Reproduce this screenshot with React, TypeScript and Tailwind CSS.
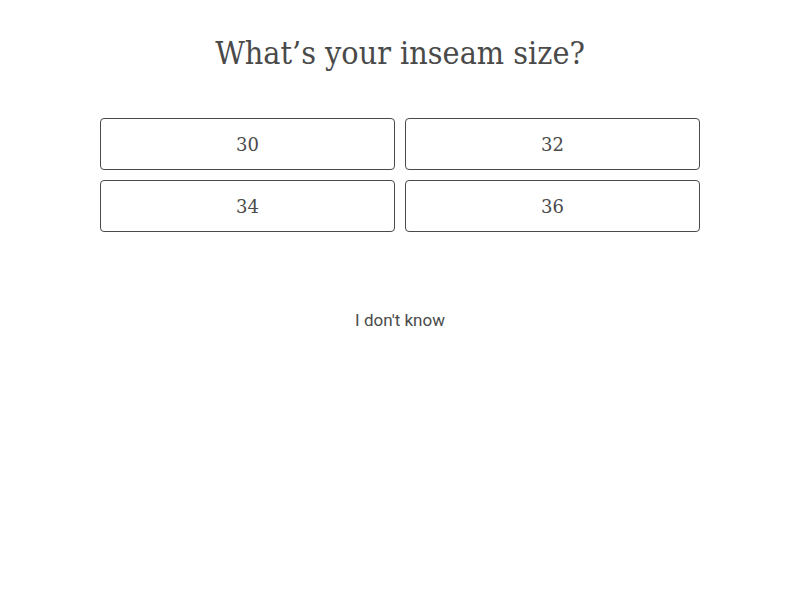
export default function App() {
  const sizes = ['30', '32', '34', '36'];
  return (
    <main className="min-h-screen bg-white text-[#4a4a4a]">
      <h1 className="pt-[32px] text-center text-[32px] leading-[42px] font-['DejaVu_Serif_Condensed','DejaVu_Serif',serif]">
        What’s your inseam size?
      </h1>
      <div className="mx-auto mt-[44px] grid w-[600px] grid-cols-2 gap-[10px]">
        {sizes.map((s) => (
          <button
            key={s}
            className="h-[52px] rounded-[4px] border border-[#4a4a4a] bg-white text-[18px] font-['DejaVu_Serif',serif] text-[#4a4a4a]"
          >
            {s}
          </button>
        ))}
      </div>
      <div className="mt-[76px] text-center">
        <button className="text-[17px] leading-[22px] font-['Roboto',sans-serif] text-[#4a4a4a]">
          I don't know
        </button>
      </div>
    </main>
  );
}
